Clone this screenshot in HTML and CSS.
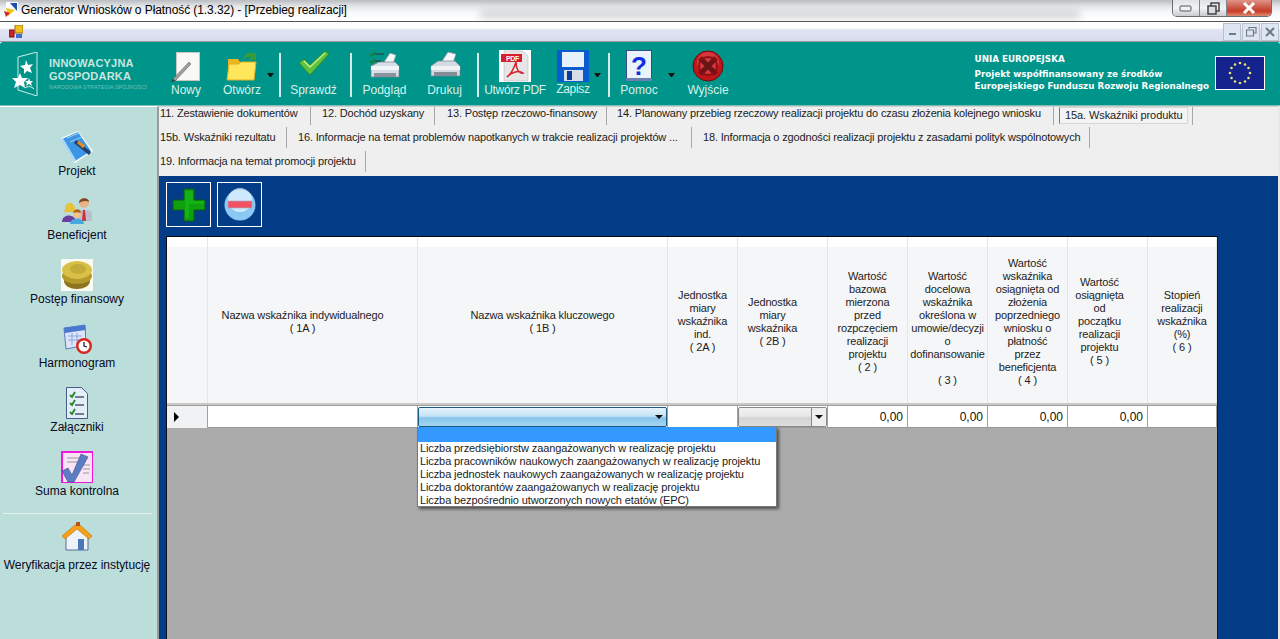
FILE: index.html
```html
<!DOCTYPE html>
<html lang="pl">
<head>
<meta charset="utf-8">
<title>Generator Wniosków o Płatność</title>
<link rel="stylesheet" href="styles.css">
</head>
<body>
<div class="window">
  <header class="titlebar">
    <div class="glass"></div>
    <svg class="appicon" width="16" height="16" viewBox="0 0 16 16"><rect x="3" y="0" width="12" height="14" fill="#fff"/><path d="M7 1h7v8z" fill="#1d4fb0"/><path d="M3 6l9 2-7 6z" fill="#f0c419"/><path d="M1 9l6 2-4 4z" fill="#d8232a"/></svg>
    <span class="title">Generator Wniosków o Płatność (1.3.32) - [Przebieg realizacji]</span>
    <div class="winbtns">
      <div class="wb"><svg width="14" height="8" viewBox="0 0 14 8"><rect x="1" y="2" width="11" height="5" rx="1" fill="#eef2f6" stroke="#555"/></svg></div>
      <div class="wb"><svg width="13" height="13" viewBox="0 0 13 13"><rect x="4" y="1" width="8" height="8" fill="none" stroke="#444" stroke-width="1.5"/><rect x="1" y="4" width="8" height="8" fill="#d8dde2" stroke="#444" stroke-width="1.5"/></svg></div>
      <div class="wb close"><svg width="16" height="12" viewBox="0 0 16 12"><path d="M3 1l10 10M13 1L3 11" stroke="#fff" stroke-width="3"/></svg></div>
    </div>
  </header>

  <div class="menubar">
    <svg class="mdi" width="14" height="14" viewBox="0 0 14 14"><rect x="6" y="0" width="8" height="8" fill="#f0c020" stroke="#a07010"/><rect x="0" y="5" width="5" height="7" fill="#d02020" stroke="#801010"/><rect x="7" y="9" width="6" height="4" fill="#3a6fd0"/></svg>
    <div class="mdibtns">
      <div class="mb"><svg width="9" height="9" viewBox="0 0 9 9"><rect x="1" y="6" width="7" height="2" fill="#6d7a86"/></svg></div>
      <div class="mb"><svg width="11" height="10" viewBox="0 0 11 10"><path d="M3 2V0.5h7V6H8M0.5 3h7v6h-7z" fill="none" stroke="#6d7a86" stroke-width="1.2"/></svg></div>
      <div class="mb"><svg width="10" height="10" viewBox="0 0 10 10"><path d="M1 1l8 8M9 1l-8 8" stroke="#6d7a86" stroke-width="2"/></svg></div>
    </div>
  </div>

  <div class="toolbar">
    <div class="logo">
      <svg width="28" height="44" viewBox="0 0 28 44"><path d="M6 5L25 0v44L6 38z" fill="none" stroke="#cfeee8" stroke-width="1"/><path d="M14 8l2 5 5-1-3 4 2 5-5-2-3 3v-5l-4-3 5-1z" fill="#fff"/><path d="M8 21l2 5 6 0-4 4 1 6-5-3-6 3 2-6-4-4 6 0z" fill="#fff"/><path d="M17 26l1 3 3 0-2 2 1 3-3-2-3 2 1-3-2-2 3 0z" fill="#fff"/><path d="M13 36c3-2 6-2 9 1" stroke="#fff" fill="none"/></svg>
      <div class="logotext"><b>INNOWACYJNA</b><b>GOSPODARKA</b><small>NARODOWA STRATEGIA SPÓJNOŚCI</small></div>
    </div>
    <div class="tool w-nowy">
      <svg width="30" height="32" viewBox="0 0 30 32"><rect x="5.500" y="2.500" width="23" height="28" fill="#f8f8f4" stroke="#c8c8c0"/><path d="M2 29L18 12l2 2L4 31z" fill="#a0a0a0" stroke="#666" stroke-width=".6"/><path d="M0 32l2-3 2 2z" fill="#333"/></svg>
      <span>Nowy</span>
    </div>
    <div class="tool w-otworz">
      <svg width="32" height="32" viewBox="0 0 32 32"><path d="M2 9h10l2 3h12v8H2z" fill="#e9b820"/><path d="M1 30L3 14h10l2-2h15l-2 18z" fill="#ffe65a" stroke="#e3ae22"/><path d="M17 10c1-6 7-10 11-6l2-2v8h-7l2-3c-2-1-6 0-8 3z" fill="#3c9a3a"/></svg>
      <span>Otwórz</span>
    </div>
    <i class="caret c-otworz"></i>
    <i class="sep"></i>
    <div class="tool w-sprawdz">
      <svg width="32" height="26" viewBox="0 0 32 26"><path d="M1 13l5-4 6 6L27 1l4 3-19 21z" fill="#5fc23f" stroke="#2f8a2a"/><path d="M6 11l6 6L27 3" fill="none" stroke="#b6ee8c" stroke-width="1.5"/></svg>
      <span>Sprawdź</span>
    </div>
    <i class="sep"></i>
    <div class="tool w-podglad">
      <svg width="32" height="32" viewBox="0 0 32 32"><path d="M15 12l6-9 6 2-3 9z" fill="#f4f7fa" stroke="#88909a" stroke-width=".7"/><path d="M2 16l8-4h16l4 4v11H2z" fill="#d8dee6" stroke="#7a838e" stroke-width=".7"/><path d="M2 16h28v4H2z" fill="#f2f5f8"/><path d="M5 23h22v4H5z" fill="#8a939e"/><path d="M1 4l2 2 3-4M1 11l2 2 3-4" stroke="#1e7a2a" stroke-width="1.4" fill="none"/><path d="M6 4h9M6 11h6" stroke="#333"/></svg>
      <span>Podgląd</span>
    </div>
    <div class="tool w-drukuj">
      <svg width="32" height="30" viewBox="0 0 32 30"><path d="M13 11l6-9 8 2-3 9z" fill="#f6f8fa" stroke="#88909a" stroke-width=".7"/><path d="M2 16l7-5h17l5 5v10H2z" fill="#d4dae2" stroke="#7a838e" stroke-width=".7"/><path d="M2 16h29v4H2z" fill="#f0f3f6"/><path d="M5 22h23v4H5z" fill="#848d98"/></svg>
      <span>Drukuj</span>
    </div>
    <i class="sep s-3"></i>
    <div class="tool w-pdf">
      <svg width="32" height="32" viewBox="0 0 32 32"><rect width="32" height="32" fill="#fff"/><path d="M5 1h19l5 5v25H5z" fill="#e6e6e6" stroke="#bbb" stroke-width=".6"/><rect x="2" y="4" width="21" height="8" fill="#d8202a"/><text x="7" y="11" class="pdf-t">PDF</text><path d="M17 12c-3 9-6 13-9 15 5-5 12-7 16-4-4 1-7-4-7-11z" fill="none" stroke="#d8202a" stroke-width="1.5"/></svg>
      <span>Utwórz PDF</span>
    </div>
    <div class="tool w-zapisz">
      <svg width="32" height="32" viewBox="0 0 32 32"><rect width="32" height="32" rx="1" fill="#0a5ad0"/><rect x="5" y="2" width="22" height="15" fill="#e8f2fb"/><rect x="7" y="20" width="19" height="11" fill="#d6dfe8"/><rect x="10" y="21" width="5" height="9" fill="#0a3a9a"/></svg>
      <span class="up">Zapisz</span>
    </div>
    <i class="caret c-zapisz"></i>
    <i class="sep s-4"></i>
    <div class="tool w-pomoc">
      <svg width="26" height="32" viewBox="0 0 26 32"><rect x=".5" y=".5" width="25" height="30" fill="#eaf3fb" stroke="#3a4a8a"/><rect y="28" width="26" height="3" fill="#6a80b0"/><text x="13" y="25" class="q-t">?</text></svg>
      <span>Pomoc</span>
    </div>
    <i class="caret"></i>
    <div class="tool w-wyjscie">
      <svg width="32" height="32" viewBox="0 0 32 32"><circle cx="16" cy="16" r="15" fill="#c0161a" stroke="#6d0a0c"/><circle cx="16" cy="13" r="11" fill="#ea5a5e" opacity=".5"/><path d="M8 8l16 16M24 8L8 24" stroke="#6a1416" stroke-width="5"/><circle cx="16" cy="16" r="9" fill="none" stroke="#8d1014" stroke-width="2"/></svg>
      <span>Wyjście</span>
    </div>
    <div class="eu">
      <div class="eutext">
        <p class="eu1">UNIA EUROPEJSKA</p>
        <p>Projekt współfinansowany ze środków</p>
        <p>Europejskiego Funduszu Rozwoju Regionalnego</p>
      </div>
      <svg class="flag" width="50" height="34" viewBox="0 0 50 34"><rect x=".5" y=".5" width="49" height="33" fill="#14248c" stroke="#fff"/><g fill="#e8e070"><circle cx="25" cy="7" r="1.3"/><circle cx="30" cy="8.500" r="1.300"/><circle cx="33.500" cy="12" r="1.300"/><circle cx="35" cy="17" r="1.300"/><circle cx="33.500" cy="22" r="1.300"/><circle cx="30" cy="25.500" r="1.300"/><circle cx="25" cy="27" r="1.300"/><circle cx="20" cy="25.500" r="1.300"/><circle cx="16.500" cy="22" r="1.300"/><circle cx="15" cy="17" r="1.300"/><circle cx="16.500" cy="12" r="1.300"/><circle cx="20" cy="8.500" r="1.300"/></g></svg>
    </div>
  </div>

  <div class="main">
    <nav class="sidebar">
      <div class="navitem">
        <svg width="32" height="32" viewBox="0 0 32 32"><path d="M0 7L17 0l15 20-18 12z" fill="#fff"/><path d="M1 8L17 1l13 19-16 10z" fill="#3d96e4"/><path d="M1 8l13 22" stroke="#a8d6f8" stroke-width="2.500"/><path d="M6 7l12-5M9 11l12-5" stroke="#9cd0f6"/><path d="M15 9l15 12-2 3-15-12z" fill="#24406e"/><path d="M17 11l6 5" stroke="#e88a1c" stroke-width="3"/></svg>
        <span>Projekt</span>
      </div>
      <div class="navitem">
        <svg width="32" height="32" viewBox="0 0 32 32"><g transform="translate(0 2)"><circle cx="23" cy="6" r="5" fill="#e9b48c"/><path d="M18 6c0-6 10-6 10-1-3-2-7-1-10 1z" fill="#7a4a22"/><path d="M16 24v-9c3-3 11-3 15 0v9z" fill="#b9bfd0"/><path d="M22 13h2l1 11h-4z" fill="#d03030"/><circle cx="9" cy="11" r="4.500" fill="#f2c48c"/><path d="M4 12c0-8 10-8 10 0l1 3H3z" fill="#e8c23a"/><path d="M1 25c0-8 12-9 15 0z" fill="#6b3fa0"/><circle cx="16" cy="17" r="4" fill="#f2c48c"/><path d="M12 16c1-5 8-5 8 0-3-1-5-1-8 0z" fill="#a8652a"/><path d="M9 27c0-7 14-7 14 0z" fill="#48a8e0"/></g></svg>
        <span>Beneficjent</span>
      </div>
      <div class="navitem">
        <svg width="32" height="32" viewBox="0 0 32 32"><rect width="32" height="32" fill="#fbfbf4"/><ellipse cx="16" cy="22" rx="13" ry="8" fill="#8f7420"/><ellipse cx="16" cy="17" rx="15" ry="8" fill="#b39a2a"/><ellipse cx="16" cy="11" rx="15" ry="9" fill="#d8c048"/><ellipse cx="17" cy="10" rx="8" ry="5" fill="#c4aa38"/></svg>
        <span>Postęp finansowy</span>
      </div>
      <div class="navitem">
        <svg width="32" height="32" viewBox="0 0 32 32"><path d="M3 5l21-3 1 20-20 4z" fill="#dce6f8" stroke="#5a78c8"/><path d="M3 5l21-3 .5 5L4 10z" fill="#4878d0"/><path d="M7 13h14M7 17h14M11 10v12M16 10v12" stroke="#8aa4dc"/><circle cx="23" cy="23" r="8" fill="#d8281e"/><circle cx="23" cy="23" r="5.500" fill="#fff"/><path d="M23 19v4l3 1" stroke="#222" stroke-width="1.3" fill="none"/></svg>
        <span>Harmonogram</span>
      </div>
      <div class="navitem">
        <svg width="32" height="32" viewBox="0 0 32 32"><path d="M5.500 .5h15l6 6v25h-21z" fill="#e2eefa" stroke="#4a5a90"/><path d="M9 8l2 2 3-5M9 16l2 2 3-5M9 25l2 2 3-5" stroke="#2a8a2a" stroke-width="2" fill="none"/><path d="M14 10h9M14 18h9M14 27h9" stroke="#4a5a70" stroke-width="1.500"/></svg>
        <span>Załączniki</span>
      </div>
      <div class="navitem">
        <svg width="32" height="32" viewBox="0 0 32 32"><rect width="32" height="32" fill="#f018d8"/><rect x="2" y="2" width="29" height="29" fill="#f8e4f4"/><path d="M6 7h20M6 11h12M22 14h7M22 18h7M22 22h6" stroke="#999"/><path d="M1 20l6-3 4 7L20 3l7 3-14 25H7z" fill="#5c7cc4" stroke="#3a4e8a" stroke-width=".6"/></svg>
        <span>Suma kontrolna</span>
      </div>
      <hr class="navline">
      <div class="navitem last">
        <svg width="32" height="32" viewBox="0 0 32 32"><path d="M5 13v15h22V13L16 6z" fill="#eef3fb" stroke="#5a6a9a"/><rect x="17" y="17" width="6" height="11" fill="#4a78b8"/><path d="M1 14L14 3h5l12 11-3 3L16 7 4 17z" fill="#f6a01c" stroke="#b8700c" stroke-width=".6"/><rect x="15" y="0" width="4" height="4" fill="#b8501c"/></svg>
        <span>Weryfikacja przez instytucję</span>
      </div>
    </nav>

    <section class="content">
      <div class="tabs">
        <div class="tabrow r1">
          <div class="tab t11">11. Zestawienie dokumentów</div>
          <div class="tab t12">12. Dochód uzyskany</div>
          <div class="tab t13">13. Postęp rzeczowo-finansowy</div>
          <div class="tab t14">14. Planowany przebieg rzeczowy realizacji projektu do czasu złożenia kolejnego wniosku</div>
          <div class="tab active t15a"><span>15a. Wskaźniki produktu</span></div>
        </div>
        <div class="tabrow r2">
          <div class="tab t15b">15b. Wskaźniki rezultatu</div>
          <div class="tab t16">16. Informacje na temat problemów napotkanych w trakcie realizacji projektów ...</div>
          <div class="tab t18">18. Informacja o zgodności realizacji projektu z zasadami polityk wspólnotowych</div>
        </div>
        <div class="tabrow r3">
          <div class="tab t19">19. Informacja na temat promocji projektu</div>
        </div>
      </div>

      <div class="panel">
        <div class="actions">
          <button class="act" type="button" aria-label="Dodaj"><svg width="34" height="34" viewBox="0 0 34 34"><path d="M12 1h10v11h11v10H22v11H12V22H1V12h11z" fill="#0fa010" stroke="#0a5c14"/><path d="M13 3h8v10h11v3H17v14h-4z" fill="#18c018" opacity=".6"/></svg></button>
          <button class="act" type="button" aria-label="Usuń"><svg width="34" height="34" viewBox="0 0 34 34"><circle cx="17" cy="17" r="15.500" fill="#8cc8f4"/><circle cx="17" cy="12" r="12" fill="#e4f4fe" opacity=".75"/><rect x="5" y="13" width="24" height="7" fill="#f05060" stroke="#b0b0c8" stroke-width=".7"/></svg></button>
        </div>
        <div class="grid">
          <div class="hrow">
            <div class="hc"></div>
            <div class="hc off20">Nazwa wskaźnika indywidualnego<br>( 1A )</div>
            <div class="hc">Nazwa wskaźnika kluczowego<br>( 1B )</div>
            <div class="hc">Jednostka<br>miary<br>wskaźnika<br>ind.<br>( 2A )</div>
            <div class="hc off20">Jednostka<br>miary<br>wskaźnika<br>( 2B )</div>
            <div class="hc">Wartość<br>bazowa<br>mierzona<br>przed<br>rozpczęciem<br>realizacji<br>projektu<br>( 2 )</div>
            <div class="hc low">Wartość<br>docelowa<br>wskaźnika<br>określona w<br>umowie/decyzji<br>o<br>dofinansowanie<br>&nbsp;<br>( 3 )</div>
            <div class="hc">Wartość<br>wskaźnika<br>osiągnięta od<br>złożenia<br>poprzedniego<br>wniosku o<br>płatność<br>przez<br>beneficjenta<br>( 4 )</div>
            <div class="hc off16">Wartość<br>osiągnięta<br>od<br>początku<br>realizacji<br>projektu<br>( 5 )</div>
            <div class="hc">Stopień<br>realizacji<br>wskaźnika<br>(%)<br>( 6 )</div>
          </div>
          <div class="drow">
            <div class="dc rowhead"><i class="rowptr"></i></div>
            <div class="dc"></div>
            <div class="dc combo-cell"><div class="combo focus"><i class="ddarrow"></i></div></div>
            <div class="dc"></div>
            <div class="dc combo-cell"><div class="combo plain"><b class="ddbtn"><i class="ddarrow"></i></b></div></div>
            <div class="dc num">0,00</div>
            <div class="dc num">0,00</div>
            <div class="dc num">0,00</div>
            <div class="dc num">0,00</div>
            <div class="dc"></div>
          </div>
          <ul class="droplist">
            <li class="sel">&nbsp;</li>
            <li>Liczba przedsiębiorstw zaangażowanych w realizację projektu</li>
            <li>Liczba pracowników naukowych zaangażowanych w realizację projektu</li>
            <li>Liczba jednostek naukowych zaangażowanych w realizację projektu</li>
            <li>Liczba doktorantów zaangażowanych w realizację projektu</li>
            <li>Liczba bezpośrednio utworzonych nowych etatów (EPC)</li>
          </ul>
        </div>
      </div>
    </section>
  </div>
</div>
</body>
</html>
```
FILE: styles.css
```css
* { box-sizing: border-box; }
html, body { margin: 0; height: 100%; overflow: hidden; }
body { font: 12px/13px "Liberation Sans", Arial, sans-serif; color: #111; background: #fff; }
.window { height: 639px; display: flex; flex-direction: column; overflow: hidden; }

/* title bar */
.titlebar { height: 22px; flex: none; display: flex; align-items: flex-start; position: relative; overflow: hidden;
  background: linear-gradient(#b9bcc0 0, #e2e4e6 6px, #f6f7f8 12px, #fff 20px); border-bottom: 1px solid #555; }
.glass { position: absolute; left: 480px; top: 11px; width: 600px; height: 7px; background: #a9acb0; filter: blur(4px); opacity: .6; }
.appicon { margin: 2px 0 0 3px; position: relative; }
.title { position: relative; margin: 4px 0 0 2px; font-size: 12px; letter-spacing: -.08px; white-space: nowrap; color: #000; }
.winbtns { position: absolute; right: 8px; top: 0; display: flex; height: 17px; border: 1px solid #6c6f72; border-top: 0; border-radius: 0 0 5px 5px; overflow: hidden; }
.wb { width: 27px; display: flex; align-items: center; justify-content: center; background: linear-gradient(#dfe2e5, #f2f3f5 50%, #c8ccd0); border-right: 1px solid #808488; }
.wb.close { width: 44px; border: 0; background: linear-gradient(#e0948a, #cc5a48 45%, #c83c28 70%, #e08a70); }

.menubar { height: 20px; flex: none; display: flex; align-items: center; justify-content: space-between; padding: 0 1px 0 9px;
  background: linear-gradient(#fff 0, #fdfdfe 6px, #e0e3f3 8px, #d8dcf0 100%); border-bottom: 1px solid #9a9ca2; }
.mdibtns { display: flex; gap: 1px; }
.mb { width: 18px; height: 18px; display: flex; align-items: center; justify-content: center; background: #dde6f2; border: 1px solid #b8c0cc; }

/* toolbar */
.toolbar { height: 64px; flex: none; display: flex; position: relative; color: #d8f2ec; background: #00958a; border-radius: 3px 3px 0 0; border-bottom: 1px solid #7ec0b8; }
.logo { width: 156px; flex: none; display: flex; padding: 10px 0 0 12px; gap: 9px; }
.logotext { display: flex; flex-direction: column; padding-top: 5px; }
.logotext b { font: bold 11px/13px "Liberation Sans", Arial, sans-serif; letter-spacing: .2px; color: #c7e6e0; }
.logotext small { font: 5.500px/9px "Liberation Sans", Arial, sans-serif; color: #70c0b8; white-space: nowrap; }
.tool { flex: none; height: 100%; display: flex; flex-direction: column; align-items: center; justify-content: flex-end; padding-bottom: 8px; white-space: nowrap; position: relative; }
.tool svg { position: absolute; top: 8px; left: 50%; transform: translateX(-50%); }
.tool span { line-height: 14px; }
.tool span.up { margin-bottom: 1px; letter-spacing: -.3px; }
.w-nowy { width: 60px; } .w-otworz { width: 52px; }
.w-sprawdz { width: 65px; margin-right: 4px; } .w-podglad { width: 65px; } .w-drukuj { width: 55px; margin-right: 5px; }
.w-pdf { width: 72px; letter-spacing: -.3px; } .w-zapisz { width: 44px; } .w-pomoc { width: 58px; } .w-wyjscie { width: 66px; }
.caret { flex: none; width: 7px; height: 4px; margin-top: 31px; border-top: 4px solid #111; border-left: 3.5px solid transparent; border-right: 3.5px solid transparent; }
.sep { flex: none; width: 2px; height: 44px; margin-top: 11px; background: #d6ece8; }
.c-otworz { margin-left: -1px; margin-right: 5px; }
.c-zapisz { margin-left: -1px; margin-right: 7px; }
.eu { margin-left: auto; display: flex; padding: 11px 15px 0 0; gap: 6px; }
.eutext { font: bold 8.740px/12px "DejaVu Sans", Verdana, sans-serif; color: #fff; white-space: nowrap; }
.eutext p { margin: 0; }
.eu1 { margin-bottom: 3px !important; }
.flag { margin-top: 3px; }
.pdf-t { font: bold 7px "Liberation Sans", sans-serif; fill: #fff; }
.q-t { font: bold 26px "Liberation Sans", sans-serif; fill: #1030e0; text-anchor: middle; }

/* main */
.main { flex: 1; min-height: 0; display: flex; }
.sidebar { width: 159px; flex: none; background: #bcdeda; border-top: 1px solid #fff; border-right: 2px solid #9a9a9a; padding-top: 24px; display: flex; flex-direction: column; }
.navitem { height: 64px; flex: none; display: flex; flex-direction: column; align-items: center; padding-right: 3px; }
.navitem span { line-height: 16px; color: #08081e; white-space: nowrap; }
.navline { width: 149px; height: 1px; border: 0; background: #e6f0ee; margin: -2px 0 8px 3px; }
.navitem.last span { margin-top: 3px; letter-spacing: -.05px; }

.content { flex: 1; min-width: 0; display: flex; flex-direction: column; padding-right: 2px; background: #e8e8e8; }
.tabs { height: 70px; flex: none; background: #efefef; padding: 0 0 0 1px; border-top: 1px solid #cfcfcf; }
.tabrow { display: flex; height: 24px; }
.r1 { height: 20px; }
.tab { flex: none; height: 21px; font-size: 11px; line-height: 15px; white-space: nowrap; letter-spacing: -.16px; color: #1c1c1c; border-right: 1px solid #a8a8a8; display: flex; align-items: center; }
.r1 .tab { height: 18px; padding-bottom: 5px; }
.t11 { width: 151px; } .t12 { width: 124px; padding-left: 11px; } .t13 { width: 172px; padding-left: 12px; }
.t14 { width: 447px; padding-left: 10px; }
.r1 .t15a { width: 134px; margin-left: 5px; padding-bottom: 0; align-items: flex-start; }
.t15a span { border: 1px solid #d8d8d8; border-left: 1px solid #777; padding-left: 5px; width: 129px; height: 17px; background: #f4f4f4; display: block; line-height: 14px; letter-spacing: -.1px; }
.t15b { width: 127px; } .t16 { width: 405px; padding-left: 11px; } .t18 { width: 398px; padding-left: 11px; }
.t19 { width: 206px; }

.panel { flex: 1; min-height: 0; background: #033d87; padding: 6px 60px 0 7px; display: flex; flex-direction: column; }
.actions { display: flex; gap: 6px; height: 54px; flex: none; }
.act { width: 45px; height: 45px; padding: 0; background: transparent; border: 1px solid #fff; display: flex; align-items: center; justify-content: center; }
.grid { flex: 1; min-height: 0; position: relative; background: #ababab; border-top: 1px solid #0a0a14; border-left: 1px solid #0a0a14; width: 1052px; border-right: 1px solid #0a1a30; }
.hrow, .drow { display: grid; grid-template-columns: 41px 210px 250px 70px 90px 80px 80px 80px 80px 69px; }
.hrow { height: 168px; background: linear-gradient(#fff 10px, #f5f6f8 10px); border-bottom: 2px solid #c8c8c8; }
.hc { display: flex; align-items: center; justify-content: center; text-align: center; font-size: 11px; white-space: nowrap; overflow: hidden; border-right: 1px solid #e4e6e8; padding-top: 3px; color: #1c1c1c; letter-spacing: -.15px; }
.hc.low { padding-top: 16px; }
.hc.off20 { padding-right: 20px; }
.hc.off16 { padding-right: 16px; }
.drow { height: 23px; background: #fff; border-bottom: 1px solid #9a9a9a; border-top: 1px solid #a0a0a0; }
.dc { border-right: 1px solid #a0a0a0; height: 22px; }
.num { text-align: right; padding: 5px 4px 0 0; }
.rowhead { background: #f0f2f4; display: flex; align-items: center; padding-left: 7px; }
.rowptr { width: 0; height: 0; border-left: 5px solid #000; border-top: 5px solid transparent; border-bottom: 5px solid transparent; }
.combo-cell { padding: 1px 0 0 0; }
.combo { height: 20px; position: relative; border-radius: 2px; }
.combo.focus { border: 1px solid #1a5a80; background: linear-gradient(#e6f4fc, #c4e2f6 45%, #86c4ea 55%, #a6d6f2); }
.combo.plain { border: 1px solid #888; background: linear-gradient(#f2f2f2, #e8e8e8 45%, #d4d4d4 55%, #dedede); }
.ddarrow { position: absolute; right: 3px; top: 7px; border-top: 4px solid #111; border-left: 4px solid transparent; border-right: 4px solid transparent; }
.ddbtn { position: absolute; right: 0; top: 0; bottom: 0; width: 15px; background: #efefef; border-left: 1px solid #888; }
.droplist { position: absolute; left: 250px; top: 190px; width: 360px; height: 80px; margin: 0; padding: 0; list-style: none; background: #fff; border: 1px solid #7a7a7a; border-top: 0; box-shadow: 2px 2px 3px rgba(0,0,0,.55); }
.droplist li { height: 13px; line-height: 13px; padding-left: 2px; font-size: 11px; white-space: nowrap; letter-spacing: -.11px; color: #1c1c1c; }
.droplist li.sel { height: 15px; background: #3399ff; }
```
